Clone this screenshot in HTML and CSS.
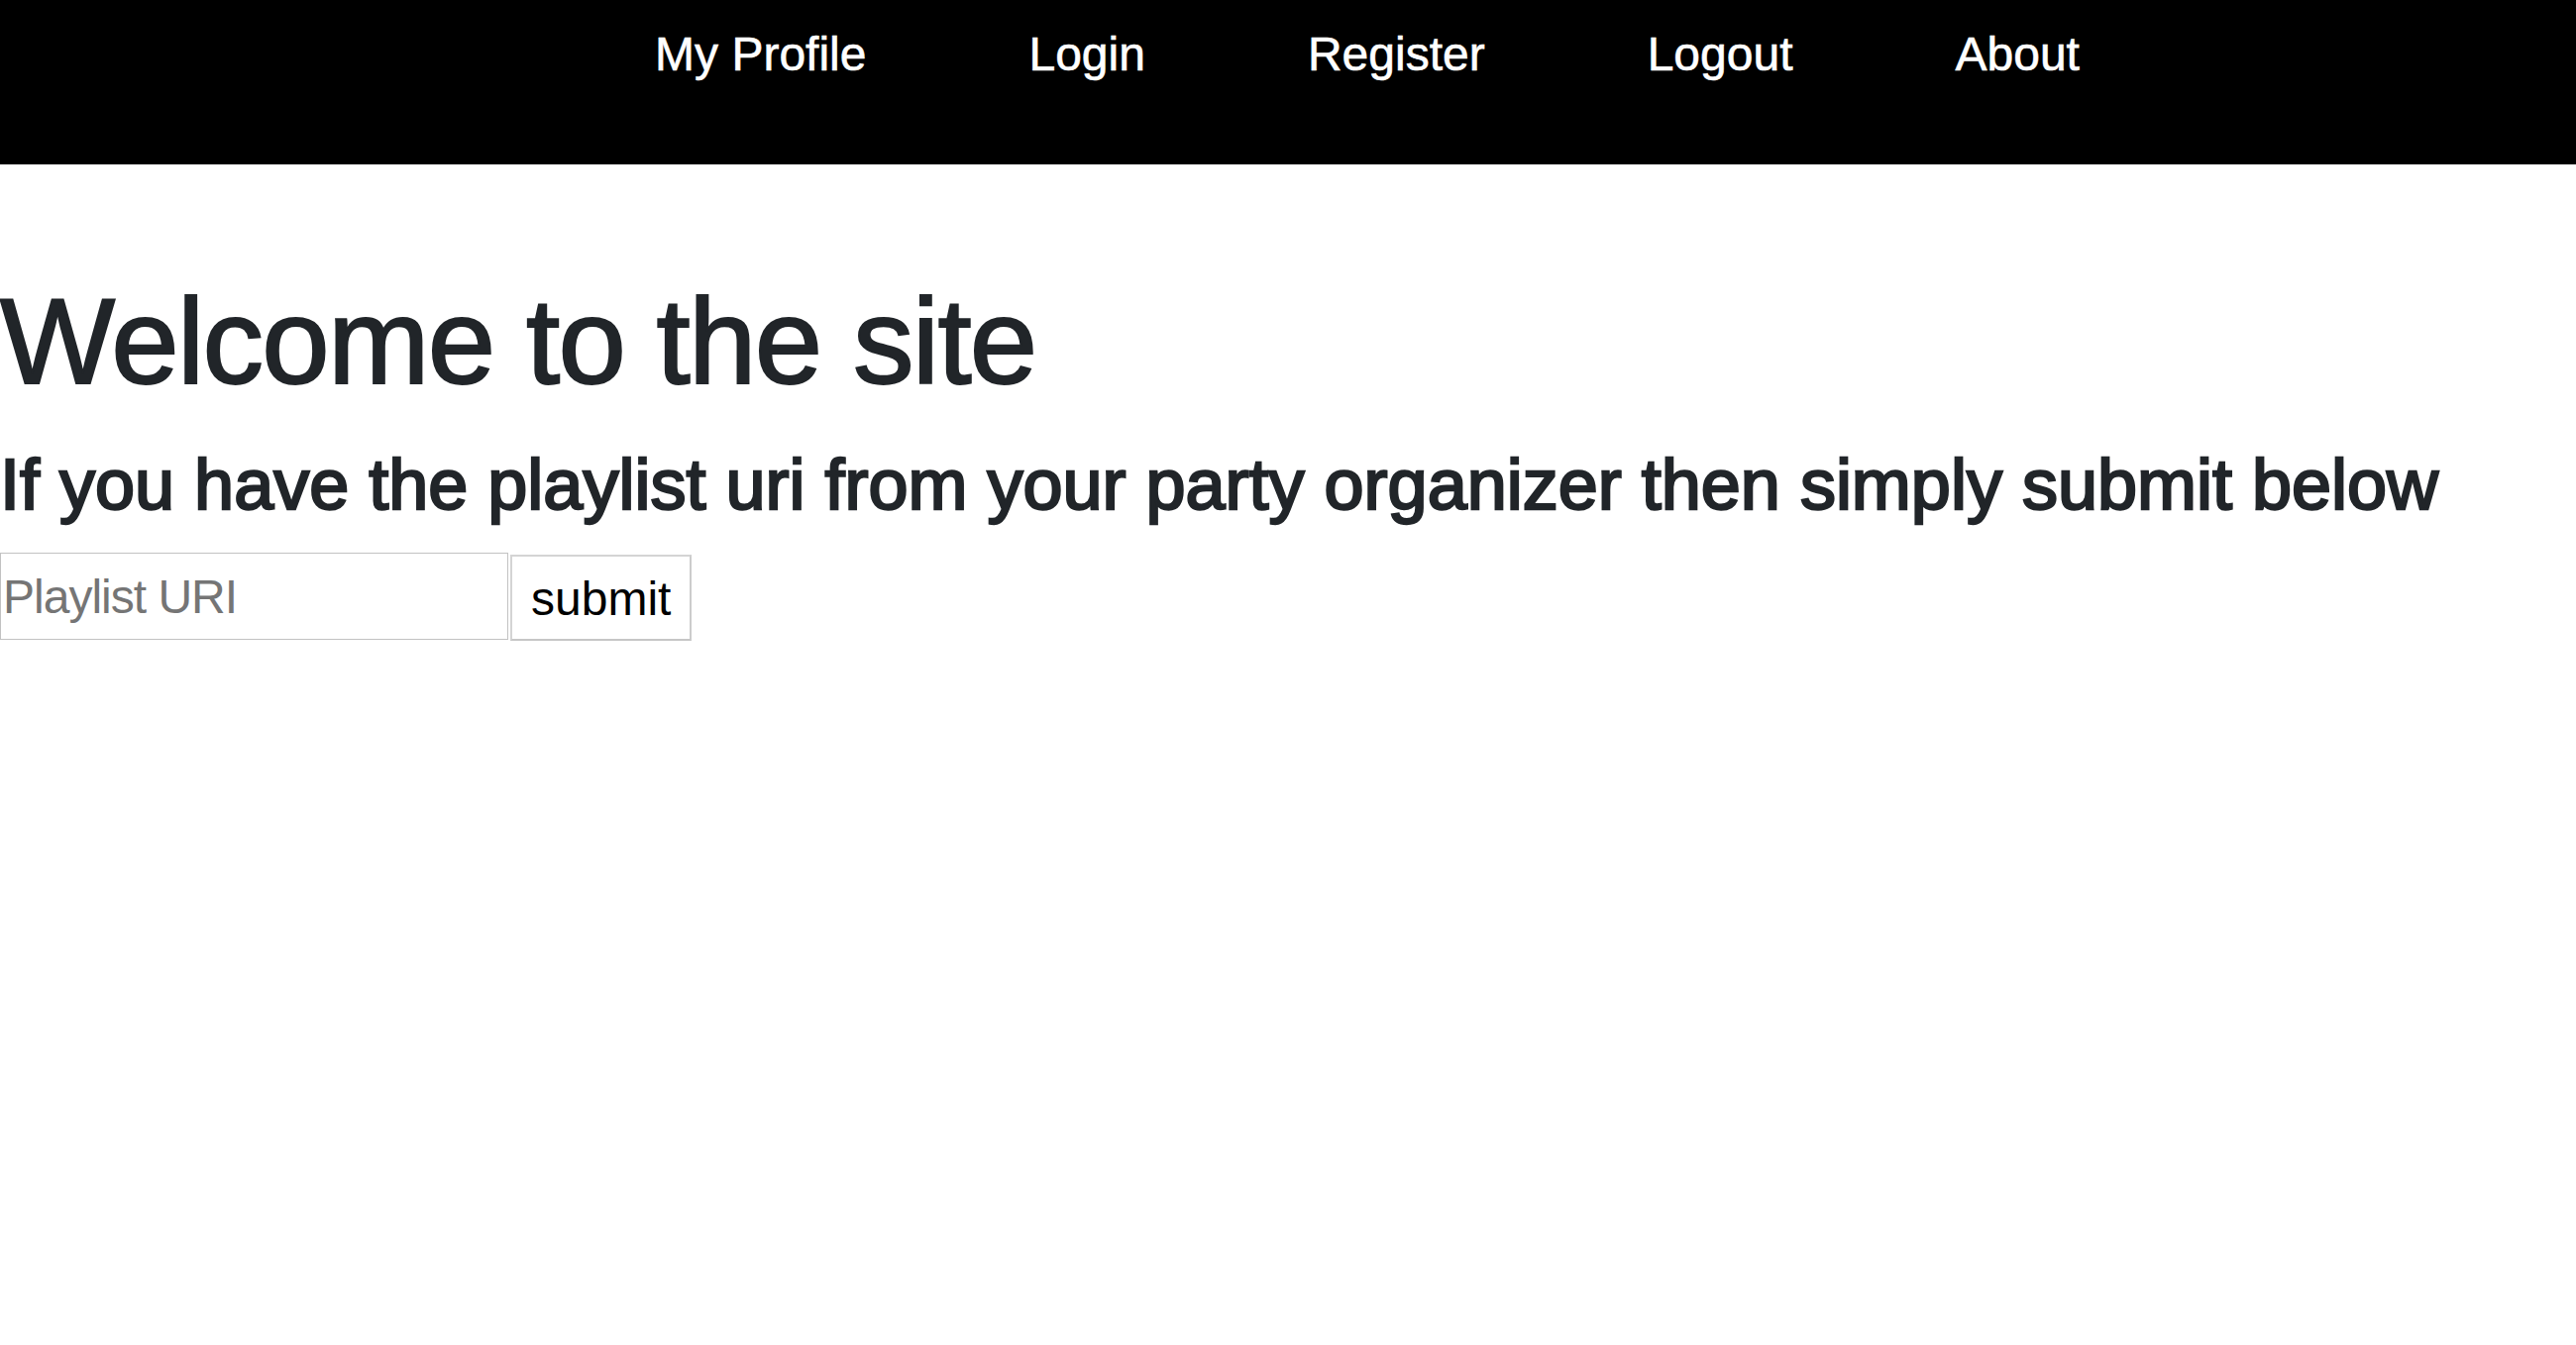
FILE: index.html
```html
<!DOCTYPE html>
<html lang="en">
<head>
<meta charset="utf-8">
<title>Welcome</title>
<link rel="stylesheet" href="styles.css">
</head>
<body>
<nav class="topnav">
  <ul class="nav-list">
    <li class="nav-item"><a href="#">My Profile</a></li>
    <li class="nav-item"><a href="#">Login</a></li>
    <li class="nav-item"><a href="#">Register</a></li>
    <li class="nav-item"><a href="#">Logout</a></li>
    <li class="nav-item"><a href="#">About</a></li>
  </ul>
</nav>
<main class="content">
  <h1 class="title">Welcome to the site</h1>
  <h2 class="subtitle">If you have the playlist uri from your party organizer then simply submit below</h2>
  <form class="uri-form">
    <input class="uri-input" type="text" placeholder="Playlist URI">
    <button class="uri-submit" type="button">submit</button>
  </form>
</main>
</body>
</html>
```
FILE: styles.css
```css
html, body {
  margin: 0;
  padding: 0;
  background: #ffffff;
}

body {
  font-family: "Liberation Sans", Arial, Helvetica, sans-serif;
  color: #212529;
}

.topnav {
  background: #000000;
  height: 166px;
}

.nav-list {
  list-style: none;
  margin: 0;
  padding: 27px 0 0 160px;
  display: flex;
  justify-content: center;
  gap: 164px;
}

.nav-item a {
  color: #ffffff;
  text-decoration: none;
  font-size: 48px;
  line-height: 55px;
  display: block;
  -webkit-text-stroke: 0.6px #ffffff;
}

.content {
  padding: 0;
}

.title {
  margin: 105px 0 27px 0;
  font-size: 123px;
  line-height: 1.2;
  font-weight: 400;
  letter-spacing: -1.7px;
  color: #212529;
  -webkit-text-stroke: 2px #212529;
}

.subtitle {
  margin: 0 0 26px 0;
  font-size: 72px;
  line-height: 1.2;
  font-weight: 400;
  letter-spacing: 0;
  color: #212529;
  -webkit-text-stroke: 2.4px #212529;
}

.uri-form {
  display: flex;
  align-items: flex-start;
}

.uri-input {
  box-sizing: border-box;
  width: 513px;
  height: 88px;
  margin: 0;
  padding: 2px 2px 0 2px;
  border: 1px solid #c2c2c2;
  font-family: "Liberation Sans", Arial, sans-serif;
  font-size: 48px;
  letter-spacing: -1px;
  color: #000;
  background: #fff;
  outline: none;
}

.uri-input::placeholder {
  color: #757575;
  opacity: 1;
}

.uri-submit {
  box-sizing: border-box;
  height: 87px;
  margin: 2px 0 0 2px;
  padding: 3px 19px 0 19px;
  border: 2px solid #d4d4d4;
  border-bottom-color: #c6c6c6;
  border-right-color: #cccccc;
  background: #ffffff;
  color: #000000;
  font-family: "Liberation Sans", Arial, sans-serif;
  font-size: 48px;
  line-height: 1;
}
```
